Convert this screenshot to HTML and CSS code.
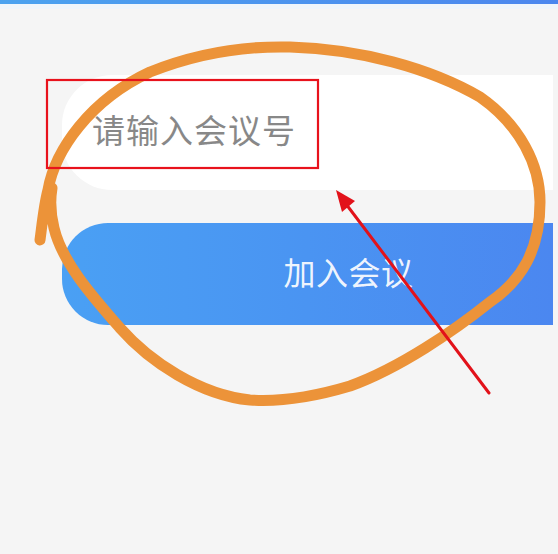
FILE: index.html
```html
<!DOCTYPE html>
<html lang="zh-CN">
<head>
<meta charset="utf-8">
<title>加入会议</title>
<link rel="stylesheet" href="styles.css">
</head>
<body>
<div class="page">
  <div class="topbar"></div>
  <div class="topband"></div>
  <main class="content">
    <div class="field"><span class="placeholder">请输入会议号</span></div>
    <div class="join-btn"><span class="join-label">加入会议</span></div>
  </main>
  <svg class="marks" width="558" height="554" viewBox="0 0 558 554" xmlns="http://www.w3.org/2000/svg">
    <path class="circle" d="M40,240 C42,225 44,205 48,190 C55,150 90,100 150,72 C200,52 250,46 290,47 C360,49 430,68 480,97 C520,125 540,165 540,202 C540,250 522,280 490,302 C455,330 400,368 350,386 C310,398 280,402 250,400 C200,395 150,362 120,328 C92,296 62,262 54,228 C50,212 50,200 52,188"/>
    <rect class="box" x="47" y="80" width="271" height="88"/>
    <line class="arrow" x1="489" y1="393" x2="346" y2="204"/>
    <polygon class="arrow-head" points="336,190 355,201 342,212"/>
  </svg>
</div>
</body>
</html>
```

FILE: styles.css
```css
html, body {
  margin: 0;
  padding: 0;
}
body {
  background: #f5f5f5;
  font-family: "Noto Sans CJK SC", "Noto Sans", sans-serif;
  overflow: hidden;
}
.page {
  position: relative;
  width: 558px;
  height: 554px;
  overflow: hidden;
  background: #f5f5f5;
}
.topbar {
  height: 4px;
  background: linear-gradient(90deg, #4aa2ef, #4a86ee);
}
.topband {
  height: 5px;
  background: #eef5fb;
}
.content {
  display: flex;
  flex-direction: column;
  padding: 66px 5px 0 62px;
}
.field {
  height: 115px;
  background: #ffffff;
  border-radius: 50px 0 0 50px;
  display: flex;
  align-items: center;
  padding-left: 30px;
}
.placeholder {
  font-size: 33px;
  color: #888888;
  letter-spacing: 1px;
  line-height: 1;
  margin-top: -6px;
}
.join-btn {
  margin-top: 33px;
  height: 102px;
  border-radius: 46px 0 0 46px;
  background: linear-gradient(90deg, #4aa0f4 0%, #4a94f2 50%, #4b87f0 100%);
  display: flex;
  align-items: center;
  justify-content: center;
  padding-left: 82px;
}
.join-label {
  font-size: 32px;
  color: rgba(255, 255, 255, 0.92);
  line-height: 1;
  letter-spacing: 0.5px;
  margin-top: -6px;
}
.marks {
  position: absolute;
  left: 0;
  top: 0;
}
.circle {
  fill: none;
  stroke: #ec9339;
  stroke-width: 11;
  stroke-linecap: round;
  stroke-linejoin: round;
}
.box {
  fill: none;
  stroke: #e8121c;
  stroke-width: 2.2;
}
.arrow {
  stroke: #e2121a;
  stroke-width: 3;
  stroke-linecap: round;
}
.arrow-head {
  fill: #e2121a;
}
```
